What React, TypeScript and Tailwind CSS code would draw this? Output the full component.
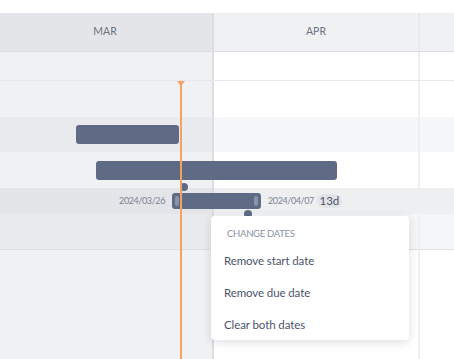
const rows = [
  { h: 'h-[29px] border-b border-[#e6e7ea]', c: ['bg-[#f0f1f3]', 'bg-white', 'bg-white'] },
  { h: 'h-[36px]', c: ['bg-[#f0f1f3]', 'bg-white', 'bg-white'] },
  { h: 'h-[35px]', c: ['bg-[#e9eaed]', 'bg-[#f6f7f8]', 'bg-[#f6f7f8]'] },
  { h: 'h-[36px]', c: ['bg-[#f0f1f3]', 'bg-white', 'bg-white'] },
  { h: 'h-[26px]', c: ['bg-[#e4e5e8]', 'bg-[#eeeff1]', 'bg-[#eeeff1]'] },
  { h: 'h-[36px] border-b border-[#dfe0e4]', c: ['bg-[#e9eaed]', 'bg-[#f5f6f7]', 'bg-[#f5f6f7]'] },
  { h: 'flex-1', c: ['bg-[#f0f1f3]', 'bg-white', 'bg-white'] },
]

function Row({ h, c }: { h: string; c: string[] }) {
  return (
    <div className={`flex ${h}`}>
      <div className={`w-[214px] border-r-2 border-[#dcdde2] ${c[0]}`} />
      <div className={`w-[206px] border-r-2 border-[#eeeff1] ${c[1]}`} />
      <div className={`flex-1 ${c[2]}`} />
    </div>
  )
}

export default function App() {
  return (
    <div
      className="relative w-[454px] h-[359px] overflow-hidden bg-white flex flex-col"
      style={{ fontFamily: 'Lato, "Noto Sans", sans-serif' }}
    >
      <div className="h-[13px] shrink-0" />
      <div className="flex h-[39px] shrink-0 border-b border-[#dcdde2] text-[10.5px] text-[#6b7280]">
        <div className="w-[214px] border-r-2 border-[#dcdde2] bg-[#e4e5e9] flex items-center justify-center pr-[2px]">MAR</div>
        <div className="w-[206px] border-r-2 border-[#e8e9ec] bg-[#f0f1f3] flex items-center justify-center">APR</div>
        <div className="flex-1 bg-[#f0f1f3]" />
      </div>
      <div className="flex-1 flex flex-col">
        {rows.map((r, i) => (
          <Row key={i} h={r.h} c={r.c} />
        ))}
      </div>

      {/* bars */}
      <div className="absolute left-[76px] top-[125px] w-[103px] h-[19px] rounded-[3px] bg-[#5f6b85]" />
      <div className="absolute left-[96px] top-[161px] w-[241px] h-[19px] rounded-[3px] bg-[#5f6b85]" />
      <div className="absolute left-[172px] top-[193px] w-[89px] h-[16px] rounded-[3px] bg-[#5f6b85] flex items-center justify-between px-[3px]">
        <div className="w-[4px] h-[10px] rounded-full bg-[#8b93a5]" />
        <div className="w-[4px] h-[10px] rounded-full bg-[#8b93a5]" />
      </div>
      <div className="absolute right-[289px] top-[193px] h-[16px] flex items-center text-[9px] tracking-[-0.4px] text-[#7b8396]">2024/03/26</div>
      <div className="absolute left-[268px] top-[193px] h-[16px] flex items-center gap-[3px] text-[9px] tracking-[-0.4px] text-[#7b8396]">
        <span>2024/04/07</span>
        <span className="w-[25px] h-[14px] flex items-center justify-center rounded-full bg-[#e2e4e8] text-[11.5px] tracking-normal text-[#4b5567]">13d</span>
      </div>

      {/* dependency dots */}
      <div className="absolute left-[180px] top-[183px] w-[8px] h-[8px] rounded-full bg-[#5f6b85]" />
      <div className="absolute left-[244px] top-[210px] w-[8px] h-[8px] rounded-full bg-[#5f6b85]" />

      {/* today line */}
      <div className="absolute left-[180px] top-[81px] bottom-0 w-[2px] bg-[#f4a261]" />
      <svg className="absolute left-[177px] top-[81px]" width="8" height="5" viewBox="0 0 8 5">
        <path d="M0 0H8L4 5Z" fill="#f4a261" />
      </svg>

      {/* menu */}
      <div className="absolute left-[211px] top-[216px] w-[198px] h-[124px] bg-white rounded-[4px] shadow-[0_2px_10px_rgba(30,40,60,0.15)] flex flex-col pt-[11px]">
        <div className="pl-[16px] h-[14px] flex items-center text-[9.5px] tracking-[-0.3px] text-[#8a92a3]">CHANGE DATES</div>
        <div className="flex flex-col text-[11.5px] tracking-[-0.1px] text-[#4b556b] pl-[13px]">
          <div className="h-[32px] flex items-center mt-[4px]">Remove start date</div>
          <div className="h-[32px] flex items-center">Remove due date</div>
          <div className="h-[32px] flex items-center">Clear both dates</div>
        </div>
      </div>
    </div>
  )
}
